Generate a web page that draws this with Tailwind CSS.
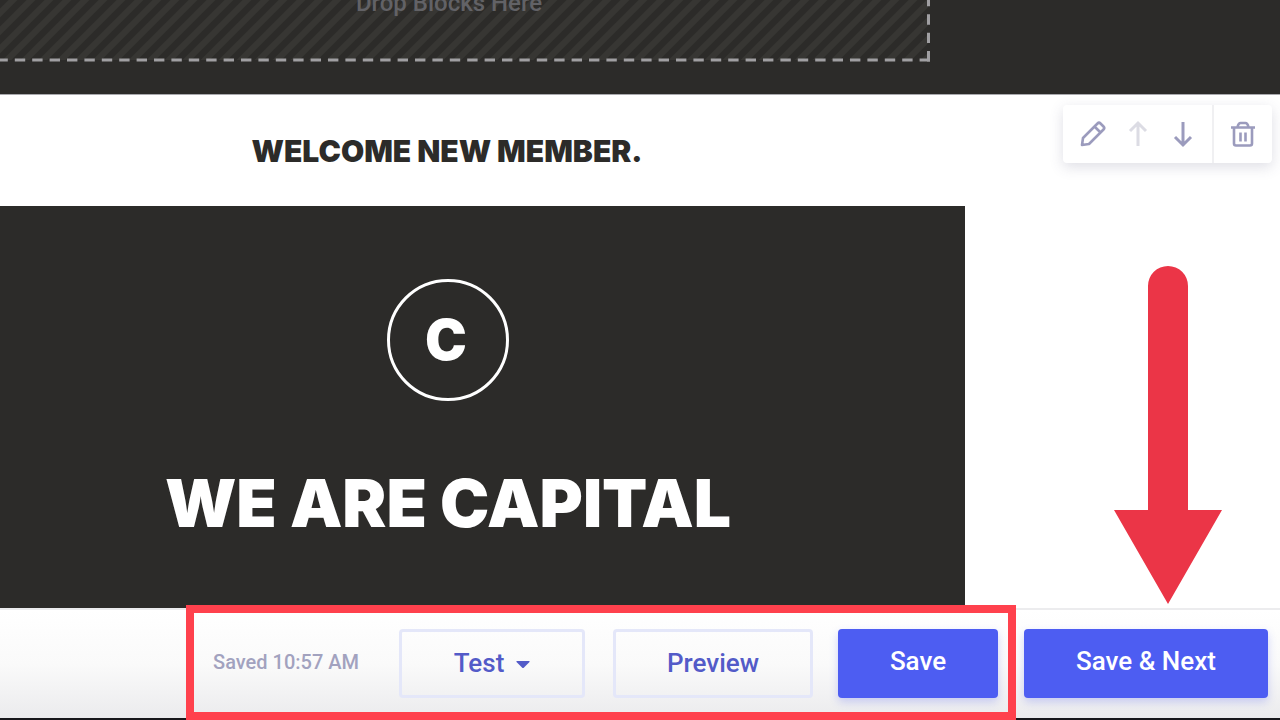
<!DOCTYPE html>
<html lang="en">
<head>
<meta charset="utf-8">
<meta name="viewport" content="width=device-width, initial-scale=1">
<title>Email editor</title>
<script src="https://cdn.jsdelivr.net/npm/@tailwindcss/browser@4"></script>
</head>
<body class="bg-white">
<div class="relative flex min-h-screen flex-col overflow-hidden font-['Inter',sans-serif]">

  <!-- Drop zone, scrolled partly out of view -->
  <section class="h-[95px] shrink-0 border-b border-[#a9a9ad] bg-[#2c2b29]">
    <div class="relative flex h-[62px] max-w-[930px] overflow-hidden">
      <svg class="absolute inset-0 h-full w-full" aria-hidden="true">
        <defs>
          <pattern id="stripes" width="18" height="18" patternUnits="userSpaceOnUse" patternTransform="translate(-5 0)">
            <path d="M-9 9L9 -9M-9 27L27 -9M9 27L27 9" stroke="#373633" stroke-width="6"/>
          </pattern>
        </defs>
        <rect width="928" height="60" fill="url(#stripes)"/>
        <path d="M930 60H0" stroke="#a09fa2" stroke-width="3" stroke-dasharray="10.400 7"/>
        <path d="M928.500 61.500V0" stroke="#a09fa2" stroke-width="3" stroke-dasharray="10.400 8"/>
      </svg>
      <p class="relative -mt-[13px] w-[898px] shrink-0 self-start text-center font-['Roboto',sans-serif] text-2xl font-medium leading-8 text-[#626266]">Drop Blocks Here</p>
    </div>
  </section>

  <main class="relative flex grow flex-col">
    <div class="h-[111px] max-w-[894px] shrink-0 pt-9 text-center">
      <h2 class="text-[30px] font-black leading-10 text-[#2c2b29]">WELCOME NEW MEMBER.</h2>
    </div>
    <div class="flex max-w-[965px] grow flex-col items-center bg-[#2c2b29] pr-[69px] pt-[73px] text-white">
      <div class="flex size-[122px] items-center justify-center rounded-full border-[3px] border-white pr-1 text-[56px] font-black leading-none">C</div>
      <h1 class="mt-[62px] whitespace-nowrap text-[66px] font-black leading-[80px]">WE ARE CAPITAL</h1>
    </div>

    <div role="toolbar" aria-label="Block actions" class="absolute right-2 top-[10px] flex h-[58px] rounded bg-white text-[#9b9bbd] shadow-[0_4px_14px_rgba(70,70,110,0.18)]">
      <div class="flex items-center gap-[17px] border-r-2 border-[#f0f0f2] pl-4 pr-[15px]">
        <button type="button" aria-label="Edit" class="size-7"><svg viewBox="0 0 28 28" class="size-7" fill="none" stroke="currentColor" stroke-width="2.600" stroke-linejoin="round"><path d="M3 25l1-7L18.500 3.500q1.500-1.500 3 0l3 3q1.500 1.500 0 3L10 24zM16 7l5 5"/></svg></button>
        <button type="button" aria-label="Move up" class="size-7 text-[#dcdce4]"><svg viewBox="0 0 28 28" class="size-7" fill="none" stroke="currentColor" stroke-width="3"><path d="M14 26V4M6 11l8-8 8 8"/></svg></button>
        <button type="button" aria-label="Move down" class="size-7"><svg viewBox="0 0 28 28" class="size-7" fill="none" stroke="currentColor" stroke-width="3"><path d="M14 2v22M6 17l8 8 8-8"/></svg></button>
      </div>
      <div class="flex items-center px-[15px]">
        <button type="button" aria-label="Delete" class="size-7"><svg viewBox="0 0 28 28" class="size-7" fill="none" stroke="currentColor" stroke-width="2.600" stroke-linejoin="round"><path d="M2 7.500h24M5 7.500v16q0 2 2 2h14q2 0 2-2v-16M8.500 7q1-4 3-4h5q2 0 3 4M11.500 12.500v9M16.500 12.500v9"/></svg></button>
      </div>
    </div>
  </main>

  <footer class="flex shrink-0 items-start justify-end border-b-2 border-t-2 border-b-[#18181b] border-t-[#ececee] bg-linear-to-b from-white via-[#fafafa] to-[#ebebed] pb-5 pr-3 pt-[19px] font-['Roboto',sans-serif] text-[26px] leading-8">
    <p class="mr-10 self-center whitespace-nowrap pb-1 text-xl font-medium text-[#a2a2bf]">Saved 10:57 AM</p>
    <button type="button" class="mr-7 flex h-[69px] w-[186px] items-center justify-center gap-3 rounded border-[3px] border-[#e4e7f9] pb-0.5 font-medium text-[#535bc8]">Test <svg viewBox="0 0 14 8" class="mt-1 h-2 w-3.5" fill="currentColor" aria-hidden="true"><path d="M1 0h12q1 0 .5 1L8 6.500q-1 1-2 0L.5 1Q0 0 1 0z"/></svg></button>
    <button type="button" class="mr-[25px] h-[69px] w-[200px] rounded border-[3px] border-[#e4e7f9] pb-0.5 font-medium text-[#535bc8]">Preview</button>
    <button type="button" class="mr-[26px] h-[69px] w-40 rounded bg-[#4d5df2] pb-1.5 font-medium text-white shadow-[0_4px_8px_rgba(77,93,242,0.25)]">Save</button>
    <button type="button" class="h-[69px] w-[244px] rounded bg-[#4d5df2] pb-1.5 font-medium text-white shadow-[0_4px_8px_rgba(77,93,242,0.25)]">Save &amp; Next</button>
  </footer>

  <!-- Callouts laid over the editor -->
  <div class="pointer-events-none absolute bottom-0 right-[264px] h-[115px] w-[830px] border-8 border-[#ff414d]"></div>
  <svg class="pointer-events-none absolute bottom-[115px] right-[58px] h-[340px] w-[108px]" viewBox="0 0 108 340" fill="#eb3547" aria-hidden="true"><path d="M34 21a20 20 0 0 1 40 0V245h34L54 339 0 245h34z"/></svg>
</div>
</body>
</html>
